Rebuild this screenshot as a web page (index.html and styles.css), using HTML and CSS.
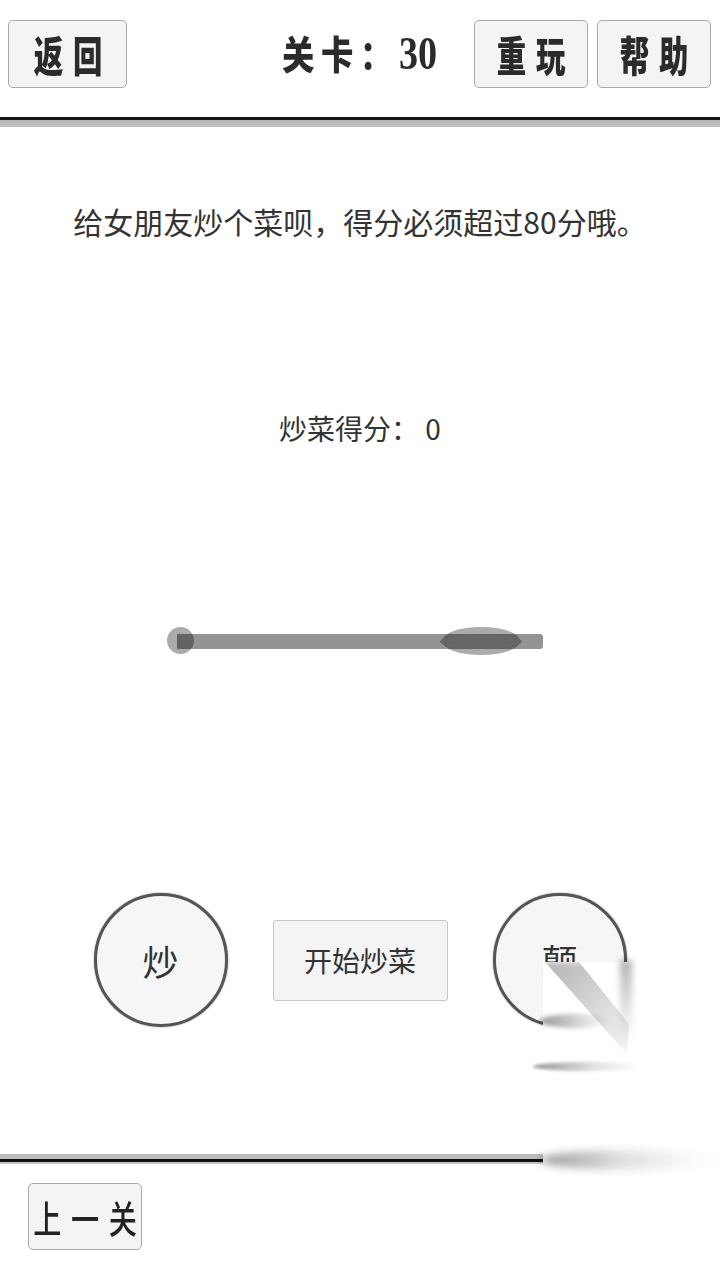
FILE: index.html
```html
<!DOCTYPE html>
<html lang="zh-CN">
<head>
<meta charset="utf-8">
<title>关卡 30</title>
<link rel="stylesheet" href="styles.css">
</head>
<body>
<div class="page">
  <header class="topbar">
    <button class="btn btn-top back"><span class="cond">返回</span></button>
    <div class="spacer"></div>
    <div class="level"><span class="level-text">关卡：<span class="num">30</span></span></div>
    <button class="btn btn-top"><span class="cond">重玩</span></button>
    <button class="btn btn-top"><span class="cond">帮助</span></button>
  </header>
  <div class="rule rule-top"></div>

  <main class="stage">
    <p class="prompt">给女朋友炒个菜呗，得分必须超过80分哦。</p>
    <p class="score">炒菜得分： 0</p>
    <div class="slider">
      <div class="track"></div>
      <div class="start-dot"></div>
      <div class="knob"></div>
      <div class="knob-core"></div>
    </div>
    <div class="controls">
      <div class="circle">炒</div>
      <button class="start">开始炒菜</button>
      <div class="circle">颠</div>
    </div>
  </main>

  <div class="rule rule-bottom"></div>
  <footer class="footer">
    <button class="btn prev"><span class="cond-n">上一关</span></button>
  </footer>

  <div class="smear">
    <div class="s-diag"></div>
    <div class="s-vert"></div>
    <div class="s-arc"></div>
    <div class="s-streak"></div>
    <div class="s-line"></div>
  </div>
</div>
</body>
</html>
```

FILE: styles.css
```css
html, body {
  margin: 0;
  padding: 0;
  background: #fff;
}

.page {
  position: relative;
  width: 720px;
  height: 1280px;
  overflow: hidden;
  display: flex;
  flex-direction: column;
  font-family: "Noto Sans CJK SC", "Noto Sans", sans-serif;
  color: #333;
}

/* ---------- header ---------- */
.topbar {
  height: 117px;
  box-sizing: border-box;
  padding: 20px 9px 0 8px;
  display: flex;
  align-items: flex-start;
}

.btn {
  box-sizing: border-box;
  margin: 0;
  padding: 0;
  background: #f4f4f4;
  border: 1px solid #a9a9a9;
  border-radius: 5px;
  display: flex;
  align-items: center;
  justify-content: center;
  overflow: visible;
  font-family: "Noto Sans CJK SC", sans-serif;
  color: #2b2b2b;
}

.btn-top {
  width: 114px;
  height: 68px;
}

.btn-top + .btn-top {
  margin-left: 9px;
}

.back {
  width: 119px;
}

.cond {
  display: inline-block;
  font-size: 42px;
  font-weight: 900;
  line-height: 1;
  letter-spacing: 14px;
  padding-left: 14px;
  transform: scale(0.7, 1);
  white-space: nowrap;
}

.spacer {
  flex: 1;
}

.level {
  width: 190px;
  height: 68px;
  margin-right: 19px;
  display: flex;
  align-items: center;
  justify-content: center;
}

.level-text {
  display: inline-block;
  font-size: 39px;
  font-weight: 900;
  line-height: 1;
  letter-spacing: 8px;
  white-space: nowrap;
  color: #2b2b2b;
  transform: scale(0.83, 1);
}

.level-text .num {
  font-family: "Liberation Serif", serif;
  font-weight: 700;
  font-size: 46px;
  letter-spacing: 0;
}

/* ---------- dividers ---------- */
.rule {
  flex: none;
  box-sizing: border-box;
}

.rule-top {
  height: 10px;
  border-top: 3px solid #151515;
  background: linear-gradient(#b4b4b4, #c4c4c4);
}

.rule-bottom {
  height: 10px;
  background: linear-gradient(#bdbdbd 0 5px, #111 5px 8px, #c4c4c4 8px 10px);
}

/* ---------- stage ---------- */
.stage {
  height: 1027px;
  flex: none;
  display: flex;
  flex-direction: column;
  align-items: center;
}

.prompt {
  margin: 74px 0 0;
  font-size: 30px;
  line-height: 40px;
  color: #333;
  white-space: nowrap;
}

.score {
  margin: 167px 0 0;
  font-size: 28px;
  line-height: 40px;
  color: #333;
  white-space: pre;
}

.slider {
  position: relative;
  align-self: flex-start;
  margin: 179px 0 0 166px;
  width: 380px;
  height: 28px;
}

.track {
  position: absolute;
  left: 11px;
  top: 7px;
  width: 366px;
  height: 15px;
  border-radius: 0 3px 3px 0;
  background: rgba(0, 0, 0, 0.42);
}

.start-dot {
  position: absolute;
  left: 1px;
  top: 0;
  width: 27px;
  height: 27px;
  border-radius: 50%;
  background: rgba(0, 0, 0, 0.33);
}

.knob {
  position: absolute;
  left: 276px;
  top: 0;
  width: 78px;
  height: 28px;
  border-radius: 50%;
  background: rgba(0, 0, 0, 0.33);
}

.knob-core {
  position: absolute;
  left: 274px;
  top: 7px;
  width: 82px;
  height: 15px;
  border-radius: 50%;
  background: #666;
}

.controls {
  margin-top: 238px;
  display: flex;
  align-items: center;
  gap: 45px;
}

.circle {
  box-sizing: border-box;
  width: 134px;
  height: 134px;
  border-radius: 50%;
  border: 3px solid #555;
  background: #f6f6f6;
  box-shadow: 0 0 2px rgba(0, 0, 0, 0.45);
  display: flex;
  align-items: center;
  justify-content: center;
  font-size: 36px;
  color: #333;
}

.start {
  box-sizing: border-box;
  width: 175px;
  height: 81px;
  margin: 0;
  padding: 0;
  background: #f4f4f4;
  border: 1px solid #c6c6c6;
  border-radius: 3px;
  font-family: "Noto Sans CJK SC", sans-serif;
  font-size: 28px;
  color: #333;
}

/* ---------- footer ---------- */
.footer {
  flex: 1;
  padding: 19px 0 0 28px;
}

.prev {
  width: 114px;
  height: 67px;
}

.cond-n {
  display: inline-block;
  font-size: 38px;
  font-weight: 500;
  line-height: 1;
  letter-spacing: 13px;
  padding-left: 13px;
  transform: scale(0.74, 1);
  white-space: nowrap;
  color: #222;
}

/* ---------- photo smear artefact (overlay) ---------- */
.smear {
  position: absolute;
  left: 543px;
  top: 962px;
  width: 177px;
  height: 318px;
  background: #fff;
}

.smear > div {
  position: absolute;
}

.s-diag {
  left: 0;
  top: 0;
  width: 90px;
  height: 95px;
  clip-path: polygon(2px 0, 36px 0, 86px 62px, 84px 92px);
  background: linear-gradient(135deg, rgba(0,0,0,0.3), rgba(0,0,0,0.1) 70%, rgba(0,0,0,0.02));
  filter: blur(3px);
}

.s-vert {
  left: 77px;
  top: -2px;
  width: 12px;
  height: 88px;
  background: linear-gradient(rgba(0,0,0,0.3), rgba(0,0,0,0.06) 70%, rgba(0,0,0,0));
  filter: blur(3px);
}

.s-arc {
  left: -3px;
  top: 52px;
  width: 70px;
  height: 14px;
  border-radius: 50%;
  background: linear-gradient(90deg, rgba(0,0,0,0.4), rgba(0,0,0,0.1) 70%, rgba(0,0,0,0));
  filter: blur(2px);
}

.s-streak {
  left: -10px;
  top: 100px;
  width: 108px;
  height: 9px;
  border-radius: 50%;
  background: linear-gradient(90deg, rgba(0,0,0,0.4), rgba(0,0,0,0.1) 60%, rgba(0,0,0,0));
  filter: blur(1.5px);
}

.s-line {
  left: -3px;
  top: 188px;
  width: 180px;
  height: 20px;
  border-radius: 50%;
  background: linear-gradient(90deg, rgba(0,0,0,0.4), rgba(0,0,0,0.12) 45%, rgba(0,0,0,0.02) 85%);
  filter: blur(4px);
}
```
